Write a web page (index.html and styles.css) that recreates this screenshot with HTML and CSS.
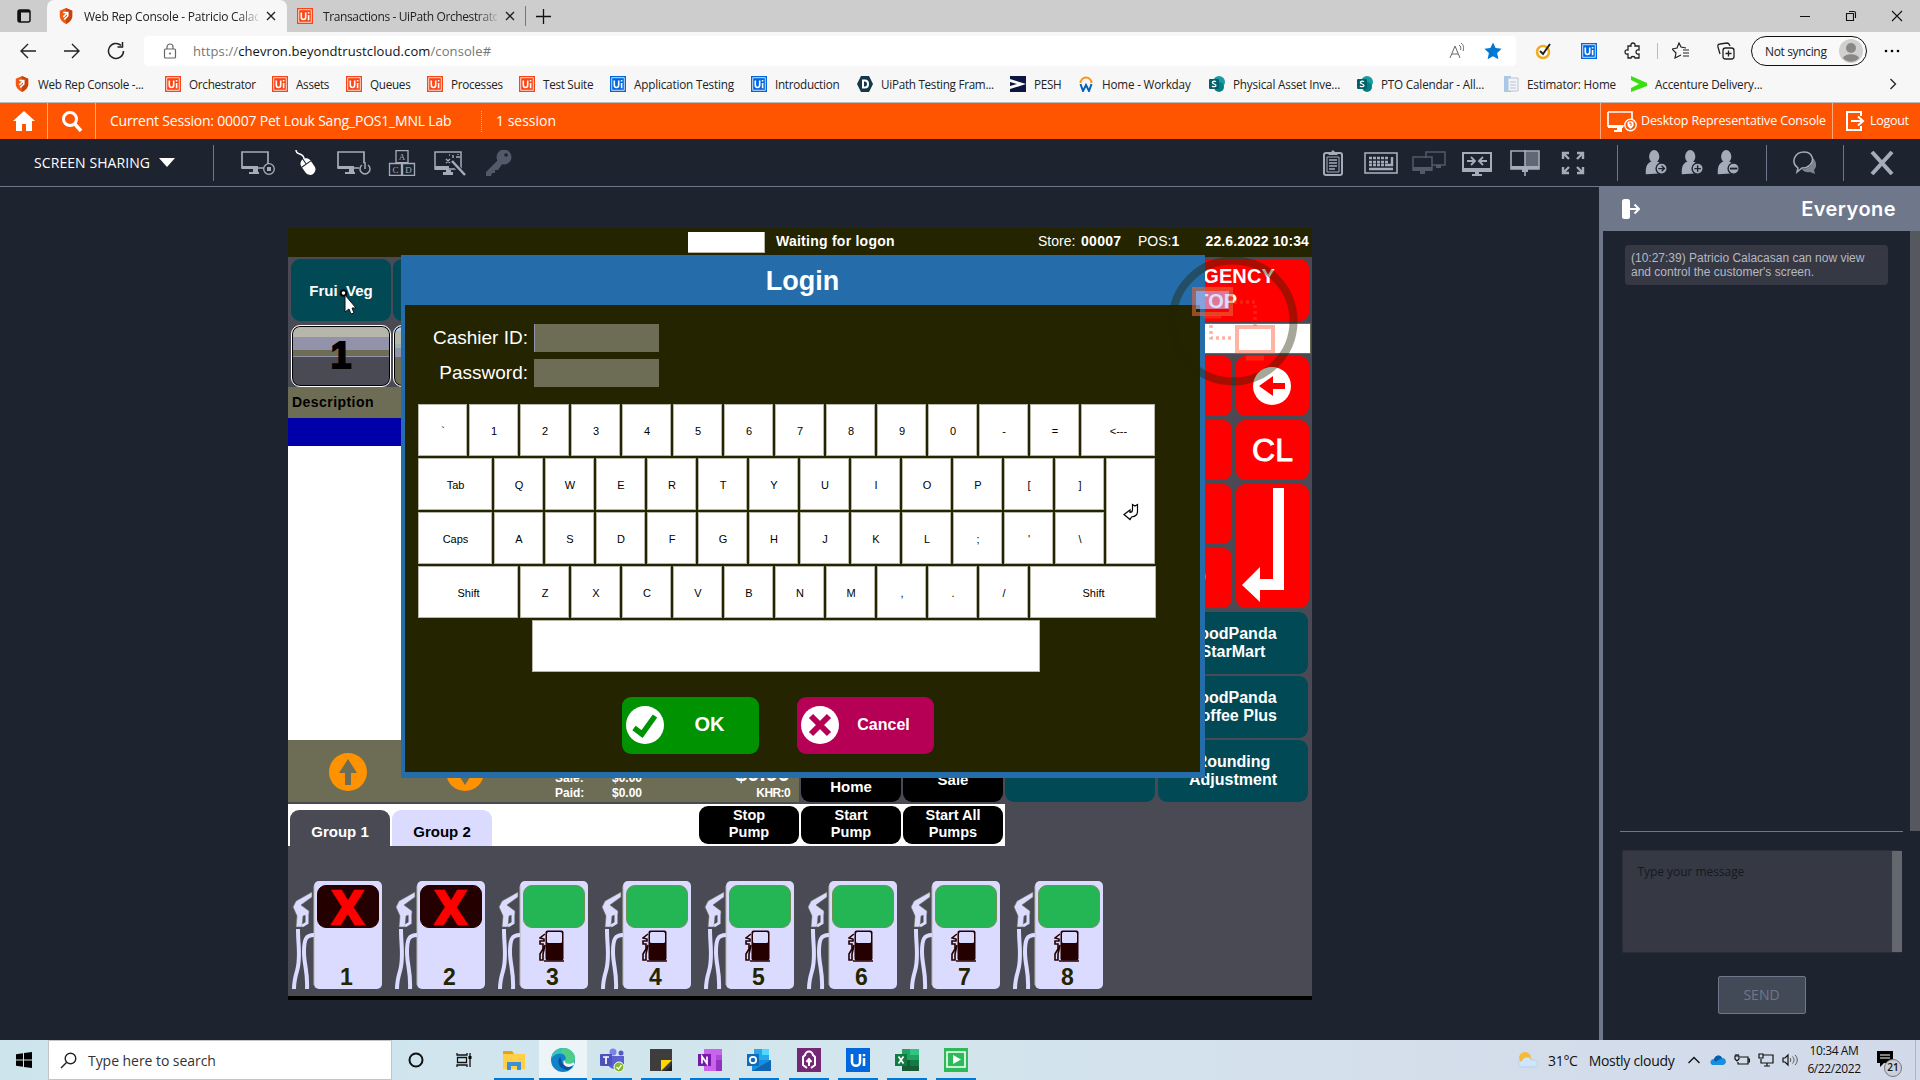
FILE: index.html
```html
<!DOCTYPE html>
<html lang="en">
<head>
<meta charset="utf-8">
<title>Web Rep Console</title>
<link rel="stylesheet" href="styles.css">
</head>
<body>
<svg class="defs" width="0" height="0">
  <symbol id="shield" viewBox="0 0 16 18"><path d="M8 0l7 3v6c0 4-3 7-7 9-4-2-7-5-7-9V3z" fill="#f25a12"/><path d="M8 0l7 3v6c0 4-3 7-7 9z" fill="#c6440b"/><path d="M5 5h5v4L6 13M10 5L5 10" stroke="#fff" stroke-width="1.8" fill="none"/></symbol>
  <symbol id="ui" viewBox="0 0 16 16"><path fill="currentColor" d="M0 0h16v16H0z"/><path d="M1.7 1.7h12.6v12.6H1.7z" fill="none" stroke="#fff" stroke-width=".8"/><path d="M4.3 4.5v4.6c0 3.2 4.4 3.2 4.4 0V4.5M11.6 7v5.2M11.6 4v1.6" fill="none" stroke="#fff" stroke-width="1.6"/></symbol>
  <symbol id="x" viewBox="0 0 10 10"><path d="M1 1l8 8M9 1l-8 8" stroke="currentColor" stroke-width="1.4" fill="none"/></symbol>
  <symbol id="sp" viewBox="0 0 16 16"><circle cx="10" cy="6" r="6" fill="#1a9ba1"/><circle cx="10" cy="11" r="5" fill="#037f83"/><rect y="3" width="10" height="10" rx="1" fill="#03606a"/><path d="M7 5.8C6 4.9 3.4 5 3.4 6.6S7 7.800 7 9.400 4 11 3 10" fill="none" stroke="#fff" stroke-width="1.300"/></symbol>
  <symbol id="mon" viewBox="0 0 34 26"><path d="M1 2h26v16H1zM1 17h16" fill="none" stroke="currentColor" stroke-width="1.700"/><path d="M1 16h16v3H1zM12 19h5v3h-5zM8 22h10v2H8z" fill="currentColor"/></symbol>
  <symbol id="person" viewBox="0 0 26 28"><ellipse cx="10" cy="7" rx="5.500" ry="7" fill="currentColor"/><path d="M1 26c-1-10 3-14 9-14s9 3 9 13z" fill="currentColor"/><circle cx="18" cy="20" r="6" fill="#a5acb9" stroke="#1e2330" stroke-width="1.500"/></symbol>
  <symbol id="pump" viewBox="0 0 91 108">
    <rect x="22" width="68" height="108" rx="5" fill="#dbdbff"/><path d="M22 5v99" stroke="#b6b6aa"/>
    <path d="M20 11v5L9 24l8 6v3l-6 2-1 11H4l1-11-4-9 3-6z" fill="#dbdbff" stroke="#6d6d55" stroke-width=".6"/>
    <path d="M15 33v9l-5 3" fill="none" stroke="#dbdbff" stroke-width="3"/>
    <path d="M6 48c0 18 3 28-1 42-3 10-3 12-3 18M22 54c-8 0-10 4-10 17s4 20 3 37" fill="none" stroke="#dbdbff" stroke-width="4"/>
  </symbol>
  <symbol id="fuel" viewBox="0 0 25 32"><rect x="6.500" y=".500" width="18" height="30" rx="2" fill="#240000"/><rect x="8" y="2" width="15" height="11" rx="1.500" fill="#dbdbff"/><path d="M6 4L1 8l4 1v2H1v3h3v5l-3 5v6h3v-6l2-9" fill="none" stroke="#240000" stroke-width="1.600"/><path d="M5 31h20" stroke="#240000" stroke-width="1.500"/></symbol>
</svg>

<div class="tabs">
  <svg class="tabmenu" viewBox="0 0 14 14"><rect x="1" y="1" width="12" height="12" rx="2" fill="none" stroke="#111" stroke-width="1.500"/><path d="M1 1h12v2.500H4V13H1z" fill="#111"/></svg>
  <div class="tab active"><svg class="fav"><use href="#shield"/></svg><span class="ttl">Web Rep Console - Patricio Calac</span><svg class="close"><use href="#x"/></svg></div>
  <div class="tab"><svg class="fav orange"><use href="#ui"/></svg><span class="ttl tight">Transactions - UiPath Orchestrato</span><svg class="close"><use href="#x"/></svg></div>
  <svg class="plus" viewBox="0 0 15 15"><path d="M7.500 0v15M0 7.500h15" stroke="#111" stroke-width="1.300"/></svg>
  <div class="winbtns">
    <svg viewBox="0 0 12 12"><path d="M1 6.500h10" stroke="#111"/></svg>
    <svg viewBox="0 0 12 12"><path d="M1.500 3.500h7v7h-7zM4 1.500h5c1 0 1.500.500 1.500 1.500v5" fill="none" stroke="#111" stroke-width="1.100"/></svg>
    <svg viewBox="0 0 12 12"><path d="M1 1l10 10M11 1L1 11" stroke="#111" stroke-width="1.100"/></svg>
  </div>
</div>

<div class="nav">
  <div class="navbtns">
    <svg viewBox="0 0 18 18"><path d="M17 9H2M9 2L2 9l7 7" fill="none" stroke="#222" stroke-width="1.400"/></svg>
    <svg viewBox="0 0 18 18"><path d="M1 9h15M9 2l7 7-7 7" fill="none" stroke="#222" stroke-width="1.400"/></svg>
    <svg viewBox="0 0 18 18"><path d="M16.500 9a7.500 7.500 0 1 1-2.500-5.600M15.500 0v5h-5" fill="none" stroke="#222" stroke-width="1.500"/></svg>
  </div>
  <div class="address">
    <svg class="lock" viewBox="0 0 14 16"><rect x="1.500" y="6" width="11" height="9" rx="1" fill="none" stroke="#666" stroke-width="1.200"/><path d="M4 6V4a3 3 0 0 1 6 0v2" fill="none" stroke="#666" stroke-width="1.200"/><circle cx="7" cy="10.500" r="1" fill="#666"/></svg>
    <span class="url">https://<b>chevron.beyondtrustcloud.com</b>/console#</span>
    <svg class="read" viewBox="0 0 16 16"><path d="M1 15L6 3l5 12M3 11h6M10 2c2 1 2 3 1.500 5M12 0c3 2 3 5 2 8" fill="none" stroke="#666"/></svg>
    <svg class="fstar" viewBox="0 0 18 18"><path d="M9 .500l2.600 5.600 6 .700-4.500 4.200 1.300 6.300L9 14.200l-5.400 3.100L4.900 11 .400 6.800l6-.700z" fill="#0078d4"/></svg>
  </div>
  <div class="exts">
    <svg viewBox="0 0 18 18"><circle cx="8" cy="10" r="6" fill="#fff" stroke="#f0ad1e" stroke-width="2.500"/><path d="M5 9l3 3 7-10" fill="none" stroke="#222" stroke-width="2"/></svg>
    <svg viewBox="0 0 18 18" class="blue"><use href="#ui" x="1" y="1" width="16" height="16"/></svg>
    <svg viewBox="0 0 18 18"><path d="M4 4h3c-1-4 5-4 4 0h4v4c-4-1-4 5 0 4v4h-4c0-2-4-2-4 0H4v-4c-4 1-4-5 0-4z" fill="none" stroke="#222" stroke-width="1.300"/></svg>
    <i class="vsep"></i>
    <svg viewBox="0 0 18 18"><path d="M9 13l-2 1-4 2 1-5-4-4 5-1 2-5 2 4 5 1M11 8h6M11 11h6M11 14h6" fill="none" stroke="#222" stroke-width="1.200"/></svg>
    <svg viewBox="0 0 18 18"><rect x="6" y="6" width="11" height="11" rx="2.500" fill="none" stroke="#222" stroke-width="1.300"/><path d="M11.500 8.500v6M8.500 11.500h6M3 12L1 5c-.500-2 .500-3 2-3l7-1c2 0 2 1 3 3" fill="none" stroke="#222" stroke-width="1.300"/></svg>
  </div>
  <div class="pill"><span>Not syncing</span><svg viewBox="0 0 24 24"><circle cx="12" cy="12" r="12" fill="#d2d0ce"/><circle cx="12" cy="9" r="5" fill="#8a8886"/><path d="M4 19c2-5 14-5 16 0-4 5-12 5-16 0z" fill="#8a8886"/></svg></div>
  <svg class="dots" viewBox="0 0 16 4"><circle cx="2" cy="2" r="1.300"/><circle cx="8" cy="2" r="1.300"/><circle cx="14" cy="2" r="1.300"/></svg>
</div>

<div class="marks">
  <a><svg><use href="#shield"/></svg>Web Rep Console -...</a>
  <a class="orange"><svg><use href="#ui"/></svg>Orchestrator</a>
  <a class="orange"><svg><use href="#ui"/></svg>Assets</a>
  <a class="orange"><svg><use href="#ui"/></svg>Queues</a>
  <a class="orange"><svg><use href="#ui"/></svg>Processes</a>
  <a class="orange"><svg><use href="#ui"/></svg>Test Suite</a>
  <a class="blue wide"><svg><use href="#ui"/></svg>Application Testing</a>
  <a class="blue"><svg><use href="#ui"/></svg>Introduction</a>
  <a><svg viewBox="0 0 16 16"><path d="M4 0h8l4 8-4 8H4L0 8z" fill="#12384a"/><path d="M6 4.500h2c4 0 4 7 0 7H6z" fill="none" stroke="#fff" stroke-width="2"/></svg>UiPath Testing Fram...</a>
  <a><svg viewBox="0 0 16 16"><path d="M0 0h16v16H0z" fill="#0b1741"/><path d="M0 3l16 5-16 5v-3l7-2-7-2z" fill="#fff"/></svg>PESH</a>
  <a class="wide"><svg viewBox="0 0 16 16"><path d="M2.500 7a5.500 5.500 0 0 1 11 0" fill="none" stroke="#f7941d" stroke-width="2"/><path d="M2.500 8l2.500 7L8 9l3 6 2.500-7" fill="none" stroke="#0062b8" stroke-width="2"/></svg>Home - Workday</a>
  <a class="wide"><svg><use href="#sp"/></svg>Physical Asset Inve...</a>
  <a class="wide"><svg><use href="#sp"/></svg>PTO Calendar - All...</a>
  <a class="wide"><svg viewBox="0 0 16 16"><path d="M1 0h7v16H1z" fill="#a9c8e8"/><path d="M5 2h10v13H5z" fill="#f1f4f8" stroke="#b9c4d0"/><path d="M7 6h6M7 9h6M7 12h6" stroke="#b9c4d0"/></svg>Estimator: Home</a>
  <a class="wide"><svg viewBox="0 0 16 16"><path d="M0 0l16 7v3L0 16v-4l8-4-8-4z" fill="#38e010"/></svg>Accenture Delivery...</a>
  <svg class="more" viewBox="0 0 8 12"><path d="M1.500 1l5 5-5 5" fill="none" stroke="#222" stroke-width="1.300"/></svg>
</div>

<header class="session">
  <div class="cell"><svg viewBox="0 0 22 22"><path d="M11 1l11 10h-3v10h-6v-7H9v7H3V11H0z" fill="#fff"/></svg></div>
  <div class="cell"><svg viewBox="0 0 22 22"><circle cx="9" cy="9" r="6.500" fill="none" stroke="#fff" stroke-width="3"/><path d="M13 13l7 8" stroke="#fff" stroke-width="3.500"/></svg></div>
  <span class="cur">Current Session: 00007 Pet Louk Sang_POS1_MNL Lab</span>
  <span class="count">1 session</span>
  <div class="desk"><svg viewBox="0 0 30 22"><path d="M1 2h24v13M1 2v14h16" fill="none" stroke="#fff" stroke-width="1.700"/><path d="M1 15h15v3H1zM10 18h5v2h-5zM7 20h8v2H7z" fill="#fff"/><circle cx="23.500" cy="15" r="5.700" fill="#f50" stroke="#fff" stroke-width="1.400"/><path d="M20.500 12l3-1 3 1v4l-3 3-3-3z" fill="#fff"/><path d="M22 13h2v3" fill="none" stroke="#f50"/></svg><span>Desktop Representative Console</span></div>
  <div class="out"><svg viewBox="0 0 20 22"><path d="M16 6V2H2v18h14v-4M6 11h11M13 6.500l5 4.500-5 4.500" fill="none" stroke="#fff" stroke-width="2"/></svg><span>Logout</span></div>
</header>

<div class="tools">
  <div class="mode">SCREEN SHARING<i></i></div>
  <div class="group left">
    <svg viewBox="0 0 34 26"><use href="#mon"/><circle cx="28" cy="19" r="5.300" fill="#1e2330" stroke="currentColor" stroke-width="1.300"/><path d="M26 17h4v4h-4z" fill="currentColor"/></svg>
    <svg viewBox="0 0 34 26" class="lit"><path d="M7 0c0 6 8 2 8 9" fill="none" stroke="currentColor" stroke-width="1.500"/><g transform="rotate(-35 18 16)"><rect x="13" y="8" width="11" height="18" rx="5.500" fill="currentColor"/><path d="M13 14h11M18.500 8v6" stroke="#1e2330"/></g></svg>
    <svg viewBox="0 0 34 26"><use href="#mon"/><circle cx="28" cy="19" r="6" fill="#1e2330"/><path d="M25 15a5 5 0 1 0 6 0M28 12v7" fill="none" stroke="currentColor" stroke-width="1.500"/></svg>
    <svg viewBox="0 0 34 26"><path d="M11 .700h12v12H11zM4.500 13.500h12v12h-12zM17.500 13.500h12v12h-12z" fill="none" stroke="currentColor" stroke-width="1.300"/><g class="blk"><text x="17" y="10">A</text><text x="10.500" y="23">C</text><text x="23.500" y="23">D</text></g></svg>
    <svg viewBox="0 0 34 26"><path d="M2 2h26v17H2z" fill="none" stroke="currentColor" stroke-width="1.500"/><path d="M2 16h14v4H2zM10 22h10v3H10zM13 20h5v3h-5z" fill="currentColor"/><path d="M17 9l14 16" stroke="#1e2330" stroke-width="5"/><path d="M19 11l13 14" stroke="currentColor" stroke-width="2.500"/><path d="M13 9l4 4M17 9l-4 4M20 5v3M23 7h4M16 5h1M25 4v1" stroke="currentColor" stroke-width="1.400"/></svg>
    <svg viewBox="0 0 34 26" class="dim"><circle cx="23" cy="7" r="7.500" fill="currentColor"/><circle cx="25" cy="5" r="1.800" fill="#1e2330"/><path d="M17 10L5 22v4h5l1-3h3v-3h3l5-7z" fill="currentColor"/></svg>
  </div>
  <div class="group mid">
    <svg viewBox="0 0 34 26"><rect x="8" y="3" width="18" height="22" rx="2" fill="none" stroke="currentColor" stroke-width="2"/><path d="M12 5l5-5 5 5z" fill="currentColor"/><path d="M11 7h12v15H11z" fill="none" stroke="currentColor"/><path d="M13 10h8M13 13h8M13 16h8M13 19h6" stroke="currentColor" stroke-width="1.500"/></svg>
    <svg viewBox="0 0 34 26"><rect x="1" y="3" width="32" height="20" fill="none" stroke="currentColor" stroke-width="1.600"/><path d="M5 8h20M5 12h20M5 15h20" stroke="currentColor" stroke-width="2.500" stroke-dasharray="3 1"/><path d="M5 19h24M28 7v8h-4" stroke="currentColor" stroke-width="2.400" fill="none"/></svg>
    <svg viewBox="0 0 34 26" class="dim"><path d="M14 8V2h19v13H20" fill="none" stroke="currentColor" stroke-width="1.500"/><path d="M1 7h19v13H1z" fill="none" stroke="currentColor" stroke-width="1.500"/><path d="M1 17h19v4H1zM8 21h5v3H8zM24 15h5v3h-5z" fill="currentColor"/></svg>
    <svg viewBox="0 0 34 26"><path d="M3 3h28v18H3z" fill="none" stroke="currentColor" stroke-width="2"/><path d="M3 18h28v3H3zM12 24h10v2H12zM15 21h4v4h-4z" fill="currentColor"/><path d="M7 11h8M11 7l4 4-4 4M27 11h-8M23 7l-4 4 4 4" fill="none" stroke="currentColor" stroke-width="1.800"/></svg>
    <svg viewBox="0 0 34 26"><path d="M3 1h28v18H3z" fill="none" stroke="currentColor" stroke-width="1.600"/><path d="M17 1h14v15H17z" fill="currentColor" opacity=".5"/><path d="M3 16h28v3H3zM14 19h6v3h-6z" fill="currentColor"/><path d="M17 0v26" stroke="currentColor" stroke-width="1.600"/></svg>
    <svg viewBox="0 0 34 26"><path d="M7 9V3h6M7 3l6 6M21 3h6v6M27 3l-6 6M7 17v6h6M7 23l6-6M21 23h6v-6M27 23l-6-6" fill="none" stroke="currentColor" stroke-width="2.400"/></svg>
  </div>
  <div class="group people">
    <svg viewBox="0 0 26 28"><use href="#person"/><path d="M14.500 20h6M18 17l3 3-3 3" fill="none" stroke="#1e2330" stroke-width="1.500"/></svg>
    <svg viewBox="0 0 26 28"><use href="#person"/><path d="M14.500 20h7M18 16.500v7" stroke="#1e2330" stroke-width="1.500"/></svg>
    <svg viewBox="0 0 26 28"><use href="#person"/><path d="M14 20h8" stroke="#1e2330" stroke-width="2"/></svg>
  </div>
  <div class="group chat"><svg viewBox="0 0 26 26"><path d="M6 18c-8-6-3-16 6-16 8 0 11 8 6 13-3 3-6 3-8 3l-5 4z" fill="none" stroke="currentColor" stroke-width="1.500"/><path d="M21 8c4 4 4 9 1 12l1 4-5-2c-4 1-7-1-8-3 7 0 11-4 11-11z" fill="currentColor" opacity=".7"/></svg></div>
  <div class="group end"><svg viewBox="0 0 24 24"><path d="M2 1l20 22M22 1L2 23" stroke="currentColor" stroke-width="4"/></svg></div>
</div>

<div class="work">
  <main class="stage">
    <div class="pos">
      <div class="poshead">
        <i class="box"></i><b class="wait">Waiting for logon</b><span class="store">Store:</span><b class="num">00007</b><span class="pn">POS:<b>1</b></span><b class="date">22.6.2022 10:34</b>
      </div>
      <div class="posbody">
        <div class="pleft">
          <div class="depts"><div class="teal first">Frui&nbsp; Veg</div><div class="teal"></div></div>
          <div class="depts"><div class="pic">1</div><div class="pic two"></div></div>
          <div class="lower">
            <div class="list">
              <div class="desc">Description</div><div class="sel"></div><div class="blank"></div>
              <div class="totals">
                <svg class="arrow" viewBox="0 0 38 38"><circle cx="19" cy="19" r="19" fill="#ff9200"/><path d="M19 6l9 14h-6v12h-6V20h-6z" fill="#6d6d55"/></svg>
                <svg class="arrow" viewBox="0 0 38 38"><circle cx="19" cy="19" r="19" fill="#ff9200"/><path d="M19 32l9-14h-6V6h-6v12h-6z" fill="#6d6d55"/></svg>
                <div class="sums"><b>Sale:</b><b>$0.00</b><b>Paid:</b><b>$0.00</b></div>
                <div class="due"><b>$0.00</b><span>KHR:0</span></div>
              </div>
            </div>
            <div class="black home">Home</div><div class="black sale">Sale</div>
          </div>
        </div>
        <div class="pright">
          <div class="red emg">EMERGENCY<br>STOP</div>
          <div class="entry"></div>
          <div class="keys">
            <div class="red"></div><div class="red back"><svg width="38" height="38" viewBox="0 0 38 38"><circle cx="19" cy="19" r="19" fill="#fff"/><path d="M6 19L20 9v7h12v6H20v7z" fill="red"/></svg></div>
            <div class="red"></div><div class="red cl">CL</div>
            <div class="red"></div><div class="red enter"><svg width="44" height="116" viewBox="0 0 44 116"><path d="M31 0h11v102H18v12L0 97l18-18v12h13z" fill="#fff"/></svg></div>
            <div class="red part">0</div>
          </div>
          <div class="bgrid">
            <div class="teal"></div><div class="teal">FoodPanda<br>StarMart</div>
            <div class="teal"></div><div class="teal">FoodPanda<br>Coffee Plus</div>
            <div class="teal"></div><div class="teal">Rounding<br>Adjustment</div>
          </div>
        </div>
      </div>
      <div class="strip">
        <div class="gtab on">Group 1</div><div class="gtab">Group 2</div>
        <div class="black push">Stop<br>Pump</div><div class="black">Start<br>Pump</div><div class="black">Start All<br>Pumps</div>
      </div>
      <div class="pumps">
        <div class="pump"><svg class="pb"><use href="#pump"/></svg><i class="off">X</i><b>1</b></div>
        <div class="pump"><svg class="pb"><use href="#pump"/></svg><i class="off">X</i><b>2</b></div>
        <div class="pump"><svg class="pb"><use href="#pump"/></svg><i></i><svg class="fl"><use href="#fuel"/></svg><b>3</b></div>
        <div class="pump"><svg class="pb"><use href="#pump"/></svg><i></i><svg class="fl"><use href="#fuel"/></svg><b>4</b></div>
        <div class="pump"><svg class="pb"><use href="#pump"/></svg><i></i><svg class="fl"><use href="#fuel"/></svg><b>5</b></div>
        <div class="pump"><svg class="pb"><use href="#pump"/></svg><i></i><svg class="fl"><use href="#fuel"/></svg><b>6</b></div>
        <div class="pump"><svg class="pb"><use href="#pump"/></svg><i></i><svg class="fl"><use href="#fuel"/></svg><b>7</b></div>
        <div class="pump"><svg class="pb"><use href="#pump"/></svg><i></i><svg class="fl"><use href="#fuel"/></svg><b>8</b></div>
      </div>

      <div class="dialog">
        <div class="dtitle">Login</div>
        <div class="form">
          <label>Cashier ID:</label><i class="in focus"></i>
          <label>Password:</label><i class="in"></i>
        </div>
        <div class="kb">
          <div class="krow"><i>`</i><i>1</i><i>2</i><i>3</i><i>4</i><i>5</i><i>6</i><i>7</i><i>8</i><i>9</i><i>0</i><i>-</i><i>=</i><i class="w74">&lt;---</i></div>
          <div class="kmid">
            <div class="kcol">
              <div class="krow"><i class="w74">Tab</i><i>Q</i><i>W</i><i>E</i><i>R</i><i>T</i><i>Y</i><i>U</i><i>I</i><i>O</i><i>P</i><i>[</i><i>]</i></div>
              <div class="krow"><i class="w74">Caps</i><i>A</i><i>S</i><i>D</i><i>F</i><i>G</i><i>H</i><i>J</i><i>K</i><i>L</i><i>;</i><i>'</i><i>\</i></div>
            </div>
            <i class="ent"><svg width="16" height="18" viewBox="0 0 16 18"><path d="M9.500 1.500l2.500 1.500 2.500-1.500v7c0 3-2 5-6 5.500l-1.500 2.500-6-5 6-4.500v2.500c2 0 2.500-1 2.500-3z" fill="none" stroke="#000" stroke-width="1.200"/></svg></i>
          </div>
          <div class="krow"><i class="w100">Shift</i><i>Z</i><i>X</i><i>C</i><i>V</i><i>B</i><i>N</i><i>M</i><i>,</i><i>.</i><i>/</i><i class="w126">Shift</i></div>
          <i class="space"></i>
        </div>
        <div class="acts">
          <div class="act ok"><svg viewBox="0 0 38 38"><circle cx="19" cy="19" r="19" fill="#fff"/><path d="M8 22l8 6L29 10" fill="none" stroke="#009200" stroke-width="5.500"/></svg><span>OK</span></div>
          <div class="act no"><svg viewBox="0 0 38 38"><circle cx="19" cy="19" r="19" fill="#fff"/><path d="M10 10l18 18M28 10L10 28" fill="none" stroke="#b60055" stroke-width="6"/></svg><span>Cancel</span></div>
        </div>
      </div>

      <svg class="cursor" viewBox="0 0 16 26"><circle cx="3.500" cy="4" r="2.800" fill="#fff" stroke="#000" stroke-width="2"/><path d="M5 6v17l4-3 2 5 3-1-2-5h4z" fill="#fff" stroke="#111"/></svg>
      <svg class="badge" viewBox="0 0 130 130">
        <circle cx="65" cy="65" r="60.500" fill="none" stroke="#242400" stroke-opacity=".4" stroke-width="8"/>
        <g fill="none" stroke="#ff4a24" stroke-opacity=".42" stroke-width="3.500">
          <path d="M26 33h37v25H26z" stroke="#e06a3c" stroke-opacity=".6" stroke-width="4"/><path d="M28 35h33v18H28z" fill="#c6c6ff" fill-opacity=".6" stroke="none"/><path d="M36 61h17" stroke-width="3"/>
          <path d="M69 71h36v25H69z" stroke-width="4"/><path d="M78 102h18" stroke-width="5"/>
          <path d="M66 46h21v24M43 69v13h22" stroke-dasharray="3 3"/>
        </g>
      </svg>
    </div>
  </main>
  <aside class="side">
    <div class="sh"><svg viewBox="0 0 18 20"><rect width="8" height="20" rx="2.500" fill="#fff"/><path d="M8 10h9M12.500 5.500L17 10l-4.500 4.500" fill="none" stroke="#fff" stroke-width="2"/></svg><span>Everyone</span></div>
    <div class="log"><div class="msg">(10:27:39) Patricio Calacasan can now view<br>and control the customer's screen.</div><i class="track"></i></div>
    <div class="compose"><div class="ta"><span>Type your message</span><i></i></div><div class="send">SEND</div></div>
  </aside>
</div>

<footer class="taskbar">
  <svg class="win" viewBox="0 0 16 16"><path d="M0 2.300l7-1v6.200H0zM8 1.100L16 0v7.500H8zM0 8.500h7v6.200l-7-1zM8 8.500h8V16l-8-1.100z"/></svg>
  <div class="search"><svg viewBox="0 0 17 17"><circle cx="10.500" cy="6.500" r="5.300" fill="none" stroke="#222" stroke-width="1.400"/><path d="M6.500 10.500L1 16" stroke="#222" stroke-width="1.400"/></svg>Type here to search</div>
  <div class="sys">
    <svg viewBox="0 0 16 16"><circle cx="8" cy="8" r="6.500" fill="none" stroke="#111" stroke-width="2"/></svg>
    <svg viewBox="0 0 16 16"><path d="M1 1v2h10V1M1 15v-2h10v2M1.500 5.500h9v5h-9zM14 1v14" fill="none" stroke="#111" stroke-width="1.300"/><path d="M12.500 4h3v3h-3z"/></svg>
  </div>
  <div class="apps">
    <div><svg viewBox="0 0 24 24"><path d="M1 3h9l2 3h11v15H1z" fill="#ffcf48"/><path d="M1 3h9l2 3H1z" fill="#e5a11a"/><path d="M5 22v-8h14v8h-4v-4H9v4z" fill="#3c8fd9"/></svg></div>
    <div class="now"><svg viewBox="0 0 24 24"><circle cx="12" cy="12" r="12" fill="#1383c9"/><path d="M0 11C1 3 7 0 12 0c7 0 12 5 12 10 0 4-3 6-6 6-3 0-5-1-4-3 3-5-3-9-8-7-3 1-5 3-6 5z" fill="#39c5b5"/><path d="M12 0c7 0 12 5 12 10 0 4-3 6-6 6-3 0-5-1-4-3 3-5-1-7-4-8z" fill="#5bd36a" opacity=".6"/><path d="M9 9c-4 5 0 13 8 13l5-3c-6 1-12-2-12-8z" fill="#0d4f9e"/><path d="M14 13c-1 3 6 4 9 1v3l-5 2c-4 0-7-3-5-7z" fill="#eef6fa"/></svg></div>
    <div><svg viewBox="0 0 24 24"><circle cx="13" cy="4" r="3.500" fill="#7b83eb"/><circle cx="21" cy="5" r="2.500" fill="#5059c9"/><path d="M7 8h17v8c0 7-15 7-16 0z" fill="#5b62d0"/><rect y="6" width="12" height="12" rx="1" fill="#4b53bc"/><path d="M3 9h6M6 9v7" stroke="#fff" stroke-width="1.700"/><circle cx="19" cy="19" r="5" fill="#80b92c" stroke="#fff"/><path d="M16.500 19l2 2 3-4" fill="none" stroke="#fff" stroke-width="1.300"/></svg></div>
    <div><svg viewBox="0 0 24 24"><path d="M1 1h22v22H1z" fill="#3d3d3d"/><path d="M12 23V12h11z" fill="#ffd800"/><path d="M12 23c6 0 11-4 11-11v11z" fill="#222"/></svg></div>
    <div><svg viewBox="0 0 24 24"><path d="M6 1h18v22H6z" fill="#ca64ea"/><path d="M18 7h6v5h-6z" fill="#ae4bd5"/><path d="M18 12h6v11h-6z" fill="#9332bf"/><rect y="6" width="13" height="12" fill="#7719aa"/><path d="M4 15.500v-7l5 7v-7" fill="none" stroke="#fff" stroke-width="1.700"/></svg></div>
    <div><svg viewBox="0 0 24 24"><path d="M7 1h15v12H7z" fill="#28a8ea"/><path d="M15 1h7v6h-7z" fill="#50d9ff"/><path d="M5 12l19 0v11H5z" fill="#1490df"/><path d="M5 23l19-11v11z" fill="#1066b5"/><rect y="6" width="12" height="12" fill="#0f6cbd"/><circle cx="6" cy="12" r="3.200" fill="none" stroke="#fff" stroke-width="1.800"/></svg></div>
    <div><svg viewBox="0 0 24 24"><path d="M0 0h24v24H0z" fill="#742774"/><path d="M8 7L6 9v8l4 3M16 7l2 2v8l-4 3M8 8c0-6 8-6 8 0M12 18v-6M9.500 14l2.500-3 2.500 3" fill="none" stroke="#fff" stroke-width="2"/></svg></div>
    <div><svg viewBox="0 0 24 24"><path d="M0 0h24v24H0z" fill="#0067df"/><path d="M6 6v8c0 5 8 5 8 0V6M18 10v8M18 6v2.300" fill="none" stroke="#fff" stroke-width="2.500"/></svg></div>
    <div><svg viewBox="0 0 24 24"><path d="M7 1h17v22H7z" fill="#21a366"/><path d="M15 1h9v6h-9z" fill="#33c481"/><path d="M7 12h17v11H7z" fill="#185c37"/><path d="M15 12h9v6h-9z" fill="#107c41"/><rect y="6" width="12" height="12" fill="#107c41"/><path d="M3.500 8.500l5 7M8.500 8.500l-5 7" stroke="#fff" stroke-width="1.700"/></svg></div>
    <div><svg viewBox="0 0 24 24"><path d="M0 0h24v24H0z" fill="#2bbb58"/><path d="M3 4h18v15H3z" fill="none" stroke="#fff" stroke-width="1.600"/><path d="M9 7l8 4.500L9 16z" fill="#fff"/></svg></div>
  </div>
  <div class="weather"><svg viewBox="0 0 20 16"><circle cx="7" cy="6" r="6" fill="#f9b932"/><path d="M4 15c-5 0-5-6 0-6 1-5 8-5 9-1 8-1 9 7 3 7z" fill="#cfe6fa" stroke="#9cc6ec" stroke-width=".6"/></svg><span>31°C</span><span>Mostly cloudy</span></div>
  <div class="tray">
    <svg viewBox="0 0 16 14"><path d="M2.500 10L8 4.500l5.500 5.500" fill="none" stroke="#111" stroke-width="1.400"/></svg>
    <svg viewBox="0 0 16 14"><path d="M3 12c-4-1-3-6 1-6 2-5 7-4 8-1 5 0 5 6 1 7z" fill="#1490df"/><path d="M4 6c2-5 7-4 8-1L5 9z" fill="#0a5cab"/></svg>
    <svg viewBox="0 0 16 14"><path d="M6 4h8v7H4V9M14 6h1.500v3H14M1 3h4v3L3 8 1 6zM2 1v2M4 1v2" fill="none" stroke="#111" stroke-width="1.200"/></svg>
    <svg viewBox="0 0 16 14"><path d="M5 2h10v8H3V6M1 1h4v4H1zM9 10v3M6 13h6" fill="none" stroke="#111" stroke-width="1.200"/></svg>
    <svg viewBox="0 0 16 14"><path d="M1 5h2l3-3v10L3 9H1z" fill="none" stroke="#111" stroke-width="1.200"/><path d="M8 5c1 1 1 3 0 4M10.500 3.500c2 2 2 5 0 7M13 2c3 3 3 7 0 10" fill="none" stroke="#555"/></svg>
  </div>
  <div class="clock">10:34 AM<br>6/22/2022</div>
  <div class="note"><svg viewBox="0 0 18 18"><path d="M1 1h16v12H8l-4 4v-4H1z"/><path d="M4 5h10M4 8h10" stroke="#fff" stroke-width="1.200"/></svg><b>21</b></div>
</footer>
</body>
</html>
```
FILE: styles.css
```css
* { box-sizing: border-box; }
body { margin: 0; width: 1920px; height: 1080px; overflow: hidden; background: #1e2330; font-family: "Open Sans", "Noto Sans", sans-serif; font-size: 12px; color: #222; }
i { font-style: normal; }
svg { display: block; flex: none; }
.defs { position: absolute; }
.orange { color: #fa4616; }
.blue { color: #0067df; }

/* browser tabs */
.tabs { height: 32px; background: #cdcdcd; display: flex; align-items: center; font-size: 12px; white-space: nowrap; }
.tabmenu { width: 14px; height: 14px; margin: 0 16px 0 17px; }
.tab { width: 239px; height: 32px; display: flex; align-items: center; padding-left: 10px; border-right: 1px solid #777; border-image: linear-gradient(transparent 20%, #777 20%, #777 80%, transparent 80%) 1; }
.tab.active { width: 240px; background: #f7f7f7; border-radius: 7px 7px 0 0; padding-left: 11px; border: 0; }
.fav { width: 16px; height: 16px; }
.ttl { width: 174px; margin: 0 8px 0 10px; letter-spacing: -.22px; -webkit-mask-image: linear-gradient(90deg, #000 88%, rgba(0, 0, 0, .15)); }
.tight { letter-spacing: -.38px; }
.close { width: 10px; height: 10px; color: #222; }
.plus { width: 15px; height: 15px; margin-left: 10px; }
.winbtns { margin-left: auto; display: flex; gap: 34px; padding-right: 17px; }
.winbtns svg { width: 12px; height: 12px; }

/* navigation */
.nav { height: 37px; background: #f7f7f7; display: flex; align-items: center; padding-top: 1px; }
.navbtns { display: flex; gap: 26px; padding-left: 19px; width: 144px; }
.navbtns svg { width: 18px; height: 18px; }
.address { width: 1372px; height: 30px; background: #fff; border-radius: 4px; display: flex; align-items: center; padding: 0 14px 0 19px; }
.lock { width: 14px; height: 16px; }
.url { font-size: 13px; margin-left: 16px; color: #767676; letter-spacing: .1px; }
.url b { font-weight: 400; color: #111; }
.read { width: 16px; height: 16px; margin-left: auto; }
.fstar { width: 18px; height: 18px; margin-left: 19px; }
.exts { display: flex; align-items: center; gap: 26.500px; padding-left: 19px; width: 235px; }
.exts svg { width: 18px; height: 18px; }
.vsep { width: 1px; height: 16px; background: #bbb; margin: 0 -12px 0 -12px; }
.pill { width: 116px; height: 30px; border: 1.500px solid #111; border-radius: 15px; background: #f9f9f9; display: flex; align-items: center; justify-content: space-between; padding: 0 3px 0 13px; font-size: 12px; letter-spacing: -.35px; white-space: nowrap; }
.pill svg { width: 24px; height: 24px; }
.dots { width: 16px; height: 4px; margin-left: 17px; }

/* bookmarks */
.marks { height: 34px; background: #f7f7f7; border-bottom: 1px solid #bcbcbc; display: grid; padding: 0 0 4px 14px; align-items: center; grid-template-columns: 151px 107px 74px 81px 92px 91px 141px 106px 153px 68px 131px 148px 146px 128px 258px 20px; white-space: nowrap; letter-spacing: -.28px; font-size: 11.700px; }
.marks a { display: flex; align-items: center; gap: 8px; color: #222; }
.marks a.wide { letter-spacing: -.18px; }
.marks a.orange svg { color: #fa4616; }
.marks a.blue svg { color: #0067df; }
.marks a svg { width: 16px; height: 16px; }
.more { width: 8px; height: 12px; }

/* session header */
.session { height: 36px; background: #f50; color: #fff; display: flex; align-items: center; font-size: 14px; white-space: nowrap; }
.cell { width: 48px; height: 36px; border-right: 1px solid #ffa77d; display: flex; align-items: center; justify-content: center; }
.cell svg { width: 22px; height: 22px; }
.cur { margin-left: 14px; width: 371px; letter-spacing: -.2px; padding-bottom: 2px; }
.count { border-left: 1px dotted #ffa77d; padding: 0 0 2px 14px; letter-spacing: 0; }
.desk { margin-left: auto; width: 232px; height: 36px; border-left: 1px solid #ffa77d; display: flex; align-items: center; gap: 4px; padding-left: 6px; font-size: 12.500px; letter-spacing: -.13px; }
.desk svg { width: 30px; height: 22px; }
.out { width: 88px; height: 36px; border-left: 1px solid #ffa77d; display: flex; align-items: center; gap: 5px; padding-left: 12px; font-size: 12.500px; letter-spacing: -.3px; }
.desk span, .out span { padding-bottom: 1px; }
.out svg { width: 20px; height: 22px; }

/* tool bar */
.tools { height: 48px; background: #1e2330; border-bottom: 1px solid #6f778b; display: flex; align-items: center; color: #a5acb9; }
.mode { width: 214px; height: 36px; border-right: 1px solid #6f778b; color: #fff; font-size: 14px; display: flex; align-items: center; padding-left: 34px; gap: 9px; letter-spacing: .08px; white-space: nowrap; }
.mode i { border: 8px solid transparent; border-top: 9px solid #fff; border-bottom: 0; }
.group { display: flex; align-items: center; height: 36px; }
.group svg { height: 26px; width: 34px; }
.left { gap: 14px; padding-left: 27px; }
.mid { gap: 14px; margin-left: auto; padding-right: 27px; border-right: 1px solid #6f778b; }
.people { width: 149px; gap: 10px; padding-left: 26px; border-right: 1px solid #6f778b; }
.people svg { width: 26px; height: 26px; }
.chat { width: 77px; padding-left: 25px; border-right: 1px solid #6f778b; }
.chat svg { width: 26px; }
.end { width: 76px; padding-left: 26px; }
.end svg { width: 24px; height: 24px; }
.lit { color: #fff; }
.dim { color: #525a69; }
.blk { font: 9px "Liberation Serif", serif; fill: currentColor; text-anchor: middle; }

.work { height: 853px; display: flex; }
.stage { width: 1599px; padding: 41px 0 0 288px; }

/* remote register screen */
.pos { position: relative; width: 1024px; height: 772px; background: #4a4a55; border-bottom: 4px solid #000; font-family: "Liberation Sans", sans-serif; overflow: hidden; color: #fff; display: flex; flex-direction: column; }
.poshead { height: 29px; background: #242400; display: flex; align-items: center; font-size: 14px; padding: 0 3px 3px 400px; white-space: nowrap; }
.box { width: 77px; height: 21px; background: #fff; border: 1px solid #b6b6aa; border-width: 0 1px 1px 0; margin-top: 3px; }
.wait { margin-left: 11px; width: 262px; letter-spacing: .25px; }
.store { width: 43px; }
.num { width: 57px; letter-spacing: .3px; }
.date { margin-left: auto; letter-spacing: .1px; }
.posbody { height: 545px; display: flex; }
.pleft { width: 715px; display: flex; flex-direction: column; }
.depts { display: flex; gap: 2px; padding: 2px 0 0 3px; height: 66px; }
.depts + .depts { height: 64px; }
.teal { background: #004955; border-radius: 9px; width: 100px; height: 62px; display: flex; align-items: center; justify-content: center; text-align: center; font-weight: 700; font-size: 16px; line-height: 18px; }
.first { font-size: 15px; padding-top: 2px; }
.pic { width: 100px; height: 62px; border-radius: 9px; border: 1px solid #fff; box-shadow: inset 0 0 0 1px #000; background: linear-gradient(#b6b6aa 11px, #9292aa 11px 24px, #6d6d55 24px 30px, #9292aa 30px 31px, #4a4a55 31px); color: #000; font: 700 37px/59px "Liberation Sans", sans-serif; text-align: center; -webkit-text-stroke: 2px #000; }
.two { background: linear-gradient(#a8cdf0 5px, #b6b6aa 5px 18px, #92b6aa 18px 22px, #9292aa 22px 31px, #6d6d55 31px); }
.lower { flex: 1; display: flex; gap: 2px; align-items: flex-end; }
.list { width: 511px; height: 415px; display: flex; flex-direction: column; }
.desc { height: 31px; background: #6d6d55; color: #000; font-weight: 700; font-size: 14px; line-height: 30px; padding-left: 4px; letter-spacing: .45px; }
.sel { height: 28px; background: #0000aa; }
.blank { flex: 1; background: #fff; }
.totals { height: 62px; background: #6d6d55; display: flex; padding: 13px 9px 0 41px; }
.arrow { width: 38px; height: 38px; margin-right: 79px; }
.arrow + .arrow { margin-right: 71px; }
.sums { display: grid; grid-template-columns: 57px 60px; grid-auto-rows: 15px; font-size: 12px; line-height: 15px; padding-top: 18px; height: 49px; }
.due { margin-left: auto; text-align: right; font-size: 12px; font-weight: 700; }
.due b { display: block; font-size: 22px; line-height: 28px; padding-top: 7px; height: 33px; }
.due span { letter-spacing: -.6px; }
.black { background: #000; border-radius: 9px; width: 100px; height: 38px; font-weight: 700; font-size: 14.500px; line-height: 17px; text-align: center; padding-top: 1px; color: #fff; }
.home, .sale { height: 62px; font-size: 15px; }
.home { padding-top: 38px; }
.sale { padding-top: 31px; }
.pright { width: 309px; padding: 2px 4px 0 2px; display: flex; flex-direction: column; }
.red { background: red; border-radius: 9px; font-weight: 700; display: flex; align-items: center; justify-content: center; }
.emg { align-self: flex-end; width: 200px; height: 62px; font-size: 20px; line-height: 25px; text-align: center; margin-right: -1px; padding: 0 0 2px 2px; letter-spacing: .1px; }
.entry { height: 31px; margin: 2px -3px 2px 0; background: #fff; border: 1px solid #6d6d55; }
.keys { display: grid; grid-template-columns: 74px 73px; grid-template-rows: repeat(4, 60px); gap: 4px; justify-content: end; height: 252px; margin-right: -1px; }
.back { padding-right: 2px; }
.cl { font-size: 32px; font-weight: 400; -webkit-text-stroke: .9px #fff; }
.enter { grid-column: 2; grid-row: 3 / 5; padding-right: 17px; }
.part { justify-content: flex-end; padding-right: 26px; font-size: 16px; }
.bgrid { margin-top: 4px; display: grid; grid-template-columns: 150px 150px; gap: 2px 3px; }
.bgrid .teal { width: 150px; }
.strip { margin-top: 2px; width: 717px; height: 42px; background: #fff; display: flex; gap: 2px; padding: 2px 2px 0 2px; }
.gtab { width: 100px; height: 36px; margin-top: 4px; border-radius: 9px 9px 0 0; background: #dbdbff; color: #000; font-weight: 700; font-size: 15px; line-height: 43px; text-align: center; }
.gtab.on { background: #4a4a55; color: #fff; }
.push { margin-left: auto; }
.pumps { display: flex; gap: 12px; padding: 35px 0 0 4px; }
.pump { width: 91px; height: 108px; display: grid; justify-items: center; grid-template-columns: 91px; grid-template-rows: 47px 32px 29px; color: #242400; }
.pb { grid-area: 1 / 1 / 4 / 2; width: 91px; height: 108px; }
.pump i { grid-area: 1 / 1; width: 62px; height: 43px; margin: 4px 0 0 20px; background: #24b655; border: 1px solid #6d9255; border-radius: 9px; }
.pump .off { background: #240000; border-color: #240000; color: red; font: 700 46px/40px "Open Sans", sans-serif; text-align: center; -webkit-text-stroke: 2.500px red; }
.fl { grid-area: 2 / 1; width: 25px; height: 32px; margin: 2px 0 0 15px; }
.pump b { grid-area: 3 / 1; font-size: 23px; line-height: 35px; margin-left: 18px; }

/* login dialog */
.dialog { position: absolute; left: 113px; top: 27px; width: 804px; height: 523px; background: #242400; border: solid #246daa; border-width: 0 5px 6px 4px; display: flex; flex-direction: column; }
.dtitle { height: 50px; background: #246daa; text-align: center; font-size: 27px; line-height: 53px; font-weight: 700; }
.form { display: grid; grid-template-columns: 123px 125px; gap: 7px 6px; padding-top: 19px; font-size: 19px; line-height: 28px; }
.form label { text-align: right; white-space: nowrap; }
.in { height: 28px; background: #6d6d55; }
.focus { background: linear-gradient(90deg, #9292aa 1px, #6d6d55 1px); }
.kb { margin: 17px 0 0 13px; width: 738px; display: flex; flex-direction: column; gap: 2px; color: #000; font-size: 11px; }
.krow { display: flex; gap: 2px; }
.kb i { width: 49px; height: 52px; background: #fff; border: 1px solid #b6b6aa; display: flex; align-items: center; justify-content: center; padding: 1px 0 0 1px; }
.kb .w74 { width: 74px; }
.kb .w100 { width: 100px; }
.kb .w126 { width: 126px; }
.kmid { display: flex; gap: 2px; }
.kcol { display: flex; flex-direction: column; gap: 2px; }
.kb .ent { height: 106px; }
.kb .space { width: 508px; margin-left: 114px; }
.acts { display: flex; gap: 38px; margin: 25px 0 0 217px; }
.act { width: 137px; height: 57px; border-radius: 9px; display: flex; align-items: center; padding-left: 4px; font-weight: 700; font-size: 16px; padding-bottom: 1px; }
.act svg { width: 38px; height: 38px; }
.act span { flex: 1; text-align: center; padding-right: 6px; }
.ok { background: #009200; font-size: 20px; }
.no { background: #b60055; }
.ok span { padding: 0 4px 2px 0; }
.cursor { position: absolute; left: 52px; top: 61px; width: 16px; height: 26px; }
.badge { position: absolute; left: 880px; top: 28px; width: 130px; height: 130px; }

/* chat side panel */
.side { flex: 1; border-left: 4px solid #6f778b; display: flex; flex-direction: column; }
.sh { height: 44px; background: #6f778b; color: #fff; display: flex; align-items: center; justify-content: space-between; padding: 0 24px 0 19px; font: 600 20px Inter, sans-serif; letter-spacing: .45px; }
.sh svg { width: 18px; height: 20px; }
.log { height: 601px; display: flex; justify-content: space-between; align-items: flex-start; padding: 0 0 0 22px; border-bottom: 1px solid transparent; }
.msg { margin-top: 14px; width: 263px; height: 40px; border-radius: 4px; background: #363944; color: #b4b8c2; font: 12px/14px "Liberation Sans", sans-serif; padding: 6px; white-space: nowrap; }
.track { width: 10px; height: 600px; background: #55585f; }
.compose { display: flex; flex-direction: column; align-items: center; margin: -1px 17px 0 17px; border-top: 1px solid #6f778b; padding-top: 18px; }
.ta { width: 280px; height: 103px; background: #363944; border-radius: 2px; display: flex; justify-content: space-between; padding-left: 15px; color: #15181f; border: 1px solid #2b2e38; border-right: 0; }
.ta span { margin-top: 12px; font-size: 12px; letter-spacing: -.05px; }
.ta i { width: 10px; background: #64676e; }
.send { margin-top: 23px; width: 88px; height: 38px; border: 1px solid #6f778b; background: #434a57; color: #6f778b; text-align: center; line-height: 36px; font-size: 14px; border-radius: 2px; }

/* taskbar */
.taskbar { height: 40px; background: linear-gradient(90deg, #cde4ec, #d3e6ee 45%, #d4deeb 75%, #d2dae9); display: flex; align-items: center; color: #111; white-space: nowrap; }
.win { width: 16px; height: 16px; margin: 0 16px; }
.search { width: 344px; height: 40px; border: 1px solid #c4c4c4; background: #fff; display: flex; align-items: center; gap: 11px; padding-left: 11px; font-size: 14px; letter-spacing: -.05px; color: #333; }
.search svg { width: 17px; height: 17px; }
.sys { display: flex; gap: 32px; padding: 0 18px 0 16px; }
.sys svg { width: 16px; height: 16px; }
.apps { display: flex; gap: 1.100px; }
.apps div { width: 48px; height: 40px; display: flex; align-items: center; justify-content: center; background: linear-gradient(#0078d4, #0078d4) 50% 100% / 40px 2px no-repeat; }
.apps .now { background-color: #edf4f8; background-size: 48px 2px; }
.apps svg { width: 24px; height: 24px; }
.weather { margin-left: auto; display: flex; align-items: center; font-size: 14px; gap: 10px; width: 168px; letter-spacing: -.3px; }
.weather span + span { margin-left: 1px; }
.weather svg { width: 20px; height: 16px; }
.tray { display: flex; gap: 8px; width: 118px; }
.tray svg { width: 16px; height: 14px; }
.clock { width: 60px; text-align: center; font-size: 12px; line-height: 18px; letter-spacing: -.4px; }
.note { display: flex; width: 50px; margin: 0 4px 0 2px; padding-left: 10px; height: 40px; align-items: center; border-right: 1px solid #aeb6c4; }
.note svg { width: 18px; height: 18px; margin-top: -2px; }
.note b { width: 18px; height: 18px; margin: 16px 0 0 -10px; border-radius: 50%; border: 1px solid #777; background: #ccd1d9; font-size: 10px; line-height: 15px; text-align: center; font-weight: 600; }
```
